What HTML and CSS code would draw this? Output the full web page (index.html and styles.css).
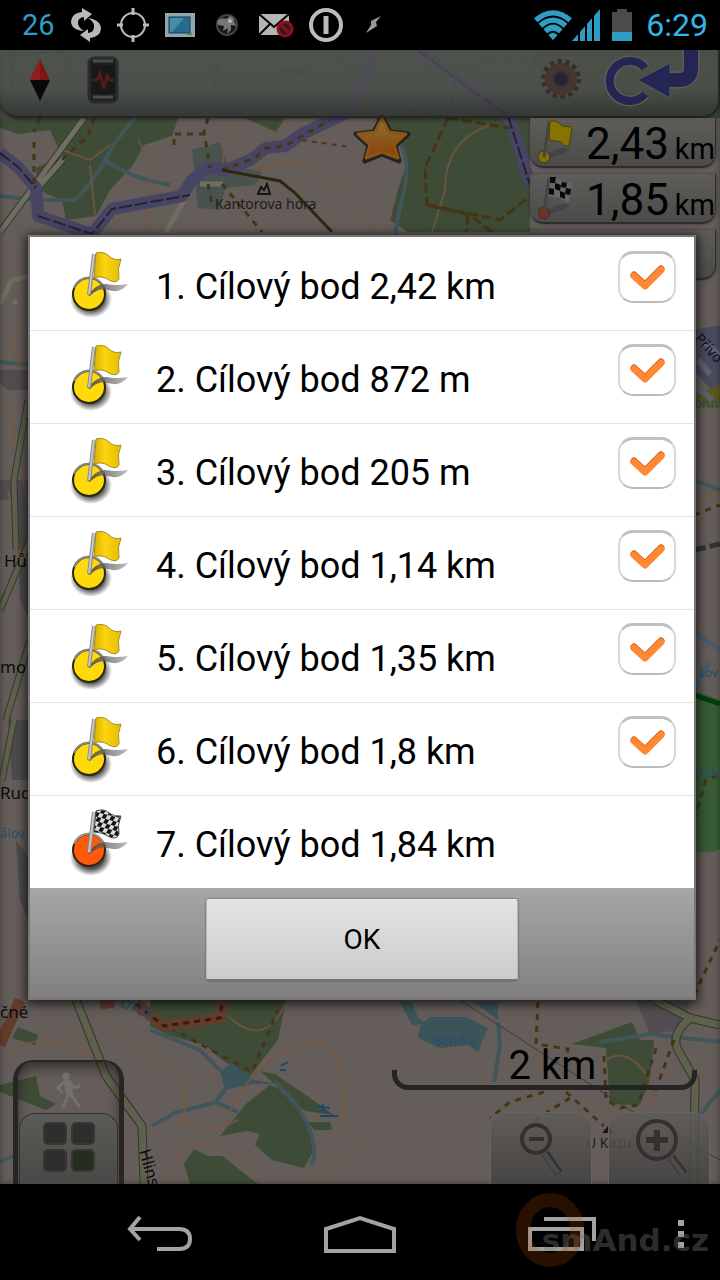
FILE: index.html
```html
<!DOCTYPE html>
<html lang="cs">
<head>
<meta charset="utf-8">
<meta name="viewport" content="width=device-width, initial-scale=1">
<title>Cílové body</title>
<link rel="stylesheet" href="styles.css">
</head>
<body>
<svg class="defs" aria-hidden="true">
  <defs>
    <linearGradient id="gold" x1="0" x2="1"><stop offset="0" stop-color="#d9b000"/><stop offset=".4" stop-color="#fbd510"/><stop offset="1" stop-color="#e6bc00"/></linearGradient>
    <radialGradient id="blur-shadow"><stop offset=".6" stop-color="#000" stop-opacity=".7"/><stop offset="1" stop-color="#000" stop-opacity="0"/></radialGradient>
    <linearGradient id="cast" x1="0" x2="1"><stop offset="0" stop-color="#444" stop-opacity=".9"/><stop offset="1" stop-color="#777" stop-opacity=".5"/></linearGradient>
    <pattern id="chess" width="8" height="9" patternUnits="userSpaceOnUse" patternTransform="translate(28 4) rotate(14) skewX(-16)"><rect width="8" height="9" fill="#ddd"/><rect width="4" height="4.500" fill="#111"/><rect x="4" y="4.500" width="4" height="4.500" fill="#111"/></pattern>
    <symbol id="pin-base" viewBox="0 0 62 68">
      <ellipse cx="23" cy="49" rx="21" ry="19" fill="url(#blur-shadow)"/>
    </symbol>
    <symbol id="pole" viewBox="0 0 62 68">
      <path d="M20 45 Q29 33 38 34 Q48 36 60 34 Q52 44 40 40 Q30 37 22 46Z" fill="url(#cast)"/>
      <path d="M21 45 L26 4" stroke="#888" stroke-width="4"/><path d="M21 44 L26 4" stroke="#c9c9c9" stroke-width="2"/>
    </symbol>
    <symbol id="flag-yellow" viewBox="0 0 62 68">
      <use href="#pin-base"/>
      <circle cx="21" cy="44" r="16" fill="#ffda0a" stroke="#2a2710" stroke-width="2"/>
      <path d="M6 38 A16 16 0 0 1 36 38" fill="none" stroke="#888" stroke-width="2"/>
      <use href="#pole"/>
      <path d="M28 3 Q36 1 41 6 Q46 11 53 9 Q49 18 51 29 Q48 34 41 30 Q34 25 26 28Z" fill="url(#gold)" stroke="#a58b24"/>
    </symbol>
    <symbol id="flag-finish" viewBox="0 0 62 68">
      <use href="#pin-base"/>
      <circle cx="21" cy="42" r="16" fill="#ff5a0a" stroke="#3a2018" stroke-width="2"/>
      <path d="M6 36 A16 16 0 0 1 36 36" fill="none" stroke="#999" stroke-width="2"/>
      <use href="#pole"/>
      <path d="M28 3 Q36 0 41 5 Q46 9 53 8 Q49 17 51 26 Q49 32 42 29 Q34 24 26 24Z" fill="url(#chess)" stroke="#444"/>
    </symbol>
    <symbol id="tick" viewBox="0 0 58 52"><path d="M16 25 L27 35 L43 19" fill="none" stroke="#c85a17" stroke-width="7" stroke-linecap="round" stroke-linejoin="round" transform="translate(0 -1)"/><path d="M16 25 L27 35 L43 19" fill="none" stroke="#ff8832" stroke-width="7" stroke-linecap="round" stroke-linejoin="round"/></symbol>
  </defs>
</svg>

<header class="status">
  <div class="status-left">
    <span class="temp">26</span>
    <svg width="32" height="34" viewBox="0 0 32 34" fill="#b9b9b9"><path d="M12 4 L12 0 L22 6 L14 13 L14 9 Q7 10 8 16 Q9 20 14 23 Q1 22 1 13 Q2 5 12 4Z"/><path d="M20 30 L20 34 L10 27 L18 21 L18 25 Q25 24 24 17 Q23 13 18 10 Q31 12 31 21 Q30 29 20 30Z"/></svg>
    <svg width="32" height="34" viewBox="1 0 32 34" fill="none" stroke="#bbb" stroke-width="2"><circle cx="17" cy="17" r="12"/><path d="M17 0V7M17 27V34M1 17H7M27 17H33" stroke-width="3"/></svg>
    <svg width="32" height="26" viewBox="0 0 32 26"><rect x="1" y="1" width="30" height="24" fill="#93a5ad"/><rect x="5" y="5" width="21" height="16" fill="#276b91" stroke="#173c55"/><path d="M6 6H20L8 20H6Z" fill="#438caa"/><path d="M23 22H28" stroke="#39974d" stroke-width="2"/></svg>
    <svg width="32" height="26" viewBox="-3 0 32 26"><circle cx="13" cy="13" r="10" fill="#171717" stroke="#444" stroke-width="2"/><path d="M3 9 Q8 5 12 7 L16 4 Q20 5 20 9 L22 14 L17 13 L17 18 L13 22 L14 16 L9 19 L10 14 L4 13Z" fill="#777"/><circle cx="16" cy="9" r="2" fill="#bbb"/></svg>
    <svg width="36" height="26" viewBox="0 0 36 26"><path d="M1 2H31V23H1Z" fill="#b5b5b5"/><path d="M1 2L16 15L31 2M1 23L12 12M20 12L31 23" fill="none" stroke="#000" stroke-width="2"/><circle cx="27" cy="17" r="7" fill="#222" stroke="#930d1c" stroke-width="3"/><path d="M22 12L32 22" stroke="#930d1c" stroke-width="3"/></svg>
    <svg width="34" height="34" viewBox="0 0 34 34"><circle cx="17" cy="17" r="15" fill="none" stroke="#bbb" stroke-width="4"/><path d="M17 8V26" stroke="#bbb" stroke-width="5"/></svg>
    <svg width="26" height="20" viewBox="-7 0 26 20"><path d="M16 1L6 6L6 10L1 18L12 11L11 7Z" fill="#999"/></svg>
  </div>
  <div class="status-right">
    <svg width="38" height="32" viewBox="0 0 40 32"><path d="M0 9Q20-8 40 9L20 32Z" fill="#309cc4"/><path d="M4 14Q20 0 36 14M9 20Q20 9 31 20M14 26Q20 20 26 26" fill="none" stroke="#000" stroke-width="2"/></svg>
    <svg width="28" height="32" viewBox="0 0 28 32"><path d="M28 0V32H0Z" fill="#309cc4"/><path d="M7 20V32M14 14V32M21 6V32" stroke="#000" stroke-width="2"/></svg>
    <svg class="battery" width="20" height="32" viewBox="0 0 20 32"><path d="M5 0H15V3H20V32H0V3H5Z" fill="#4b4b4b"/><path d="M0 23H20V32H0Z" fill="#309cc4"/></svg>
    <span class="clock">6:29</span>
  </div>
</header>

<main class="screen">
  <svg class="map" viewBox="0 50 720 1134" preserveAspectRatio="xMidYMid slice" aria-hidden="true">
    <rect y="50" width="720" height="1134" fill="#645d5a"/>
    <g fill="#3e4c37">
      <path d="M0 50H720V118H178L172 136 144 145 133 165 110 190 96 216 66 220 62 200 38 190 36 168 62 156 50 130 18 134 0 128Z"/>
      <path d="M245 118H285L276 132Z"/>
      <path d="M375 118H530V232H408L390 220 398 190 406 165 400 140Z"/>
      <path d="M150 1000H286L278 1040 250 1076 222 1060 205 1045 170 1036 150 1026Z"/>
      <path d="M220 1136L246 1104 270 1085 288 1093 312 1130 314 1150 304 1168 272 1160 255 1145 260 1134 247 1131Z"/>
      <path d="M184 1164L194 1149 208 1156 222 1156 258 1184H190Z"/>
      <path d="M260 1071L275 1074 310 1098 334 1115 305 1111ZM308 1122L330 1122 332 1130 314 1130Z"/>
      <path d="M0 1085L36 1076 40 1096 56 1104 46 1110 0 1092ZM18 1027L38 1035 35 1045 12 1038Z"/>
      <path d="M572 1044L632 1022 640 1040 654 1040 650 1080 640 1105 610 1104 606 1048Z"/>
      <path d="M694 690L720 700V850Q704 855 694 850Z" fill="#395c37"/>
    </g>
    <path d="M0 50H530L560 118H0Z" fill="#4a5147"/>
    <g fill="#48524f">
      <path d="M192 150L220 142 228 165 262 172 255 185 225 188 220 210 198 208Z"/>
      <path d="M0 370H30V390H8L0 384ZM0 480H30V500H0Z" fill="#524b50"/>
      <path d="M16 500H30V620L20 600ZM8 720H30V780H12ZM16 840L30 860V925L20 900Z" fill="#4d4b4b"/>
      <path d="M635 998L690 1003 680 1030 650 1034Z" fill="#524d52"/>
      <path d="M694 330L720 325V400L694 370Z" fill="#494a5b"/>
    </g>
    <g fill="#3b545a">
      <path d="M420 1026L430 1017H466L488 1028 482 1042 478 1052 468 1045 440 1048 418 1038Z"/>
      <path d="M400 1002H412L418 1018 428 1024 412 1025Z"/><path d="M474 1002H498V1020Z"/>
      <path d="M220 1071L232 1063 254 1080 276 1084 252 1084 225 1090Z"/>
    </g>
    <g fill="none" stroke="#41565a" stroke-width="4" stroke-linejoin="round">
      <path d="M135 118Q115 140 105 160T75 200L36 200 0 196M105 160Q130 178 170 185"/>
      <path d="M150 1030L200 1050 220 1070M152 1126L175 1113 216 1102 226 1088M216 1102L238 1112"/>
      <path d="M275 1082L296 1104Q320 1140 312 1165"/><path d="M498 1022L500 1045 494 1082"/>
      <path d="M600 1042L650 1034 720 1042M0 1162L26 1150M694 480L720 490M0 362L30 365M700 1115L720 1090"/>
      <path d="M400 145Q412 160 402 200T398 232"/>
    </g>
    <g fill="none" stroke="#78583f" stroke-width="2" opacity=".75">
      <path d="M138 140Q158 170 145 230M40 142L90 160 110 145M90 165L95 215M222 170L225 140 250 110M255 170Q300 150 340 186L360 192"/>
      <path d="M490 125Q445 140 445 190L432 232M362 210Q380 260 392 210"/>
      <path d="M90 1010Q140 1045 168 1070T180 1120Q210 1135 238 1120M60 1025Q90 1050 108 1080M170 1184Q175 1145 205 1145T260 1184M228 1114Q255 1060 300 1043T346 1125L360 1142 310 1184"/>
      <path d="M228 1016Q265 1050 285 1004M0 1062Q40 1020 98 1060M606 1060Q628 1045 650 1080L656 1140M8 400L25 490"/>
      <path d="M694 500L720 492M30 325L10 340 20 370M8 490L20 550 8 600"/>
    </g>
    <g fill="none" stroke="#383835" stroke-width="7"><path d="M0 232L84 118M36 190L64 158M16 550L14 480 28 400M0 610L30 540M6 720L30 640M2 780L14 720"/></g>
    <g fill="none" stroke="#706e61" stroke-width="5"><path d="M0 232L84 118M36 190L64 158M200 184H223M166 232L190 190M0 304L12 280 30 276M14 304L16 300"/></g>
    <path d="M16 550L14 480 28 400M0 610L30 540M6 720L30 640M2 780L14 720" fill="none" stroke="#5e614b" stroke-width="5"/>
    <g fill="none" stroke="#343630" stroke-width="9" stroke-linejoin="round"><path d="M76 1000L86 1025 106 1076 142 1126 144 1184"/><path d="M655 1000L690 1018 720 1025M690 1018Q670 1035 678 1050L695 1080 694 1184"/></g>
    <g fill="none" stroke="#5e614b" stroke-width="7" stroke-linejoin="round"><path d="M76 1000L86 1025 106 1076 142 1126 144 1184"/><path d="M655 1000L690 1018 720 1025M690 1018Q670 1035 678 1050L695 1080 694 1184"/></g>
    <g fill="none" stroke="#474563" stroke-width="12" stroke-linejoin="round"><path d="M0 153L18 167 36 188 38 216 92 234 112 209 182 196 192 180 208 167 226 170 250 160 266 148 285 146 302 134 348 112 364 84 375 50"/><path d="M418 50L455 78 508 116 520 150 530 185"/></g>
    <g fill="none" stroke="#25232e" stroke-width="2" stroke-dasharray="13 3"><path d="M0 153L18 167 36 188M38 216L92 234 112 209 190 195M418 50L455 78 508 116 530 185"/></g>
    <g fill="none" stroke="#453415" stroke-width="3" stroke-dasharray="6 6">
      <path d="M94 118L88 136 62 160M34 142V188M40 118L34 132M208 118L204 132 210 168M174 145V134H204M222 170L255 158 266 148 285 146 330 120M208 184L212 204M222 184L262 232"/>
      <path d="M170 1028L252 1072 278 1010M538 1002L536 1044 568 1049 566 1062M604 1056L606 1100 620 1108 638 1105 656 1048M544 1092L510 1102 490 1118M566 1092L604 1126M570 1098L535 1120M674 1040L655 1092M694 515L720 505M694 820L706 780 720 775M694 995L720 940"/>
      <path d="M448 118L425 168 427 205 470 215 492 232M448 118L510 128M427 205L500 220 530 196M468 215L466 232" stroke-dasharray="10 4"/>
    </g>
    <g fill="none" stroke="#39372f" stroke-width="2" stroke-dasharray="9 5" opacity=".7"><path d="M0 57L80 50M10 50L15 118M70 60L38 118M218 50L212 118M320 50L360 70M448 118L456 72 485 58H520L560 72 605 80 640 90M372 90L386 104 448 118M694 80L706 105"/></g>
    <path d="M222 170L280 181 294 192 332 232" fill="none" stroke="#30260e" stroke-width="3"/>
    <path d="M302 140L350 147" fill="none" stroke="#5a2d2a" stroke-width="2" stroke-dasharray="5 5"/>
    <path d="M258 50L300 60 330 52" fill="none" stroke="#3f6035" stroke-width="5" stroke-dasharray="5 3"/>
    <path d="M136 1004L164 1026 220 1018 222 1002M100 1004L114 1002M0 1045L20 1000" fill="none" stroke="#633d2c" stroke-width="11"/>
    <path d="M136 1004L164 1026 220 1018 222 1002" fill="none" stroke="#39180f" stroke-width="3" stroke-dasharray="6 5"/>
    <path d="M460 1000L630 1110 720 1160" fill="none" stroke="#3e3938"/>
    <path d="M694 550L720 544" stroke="#353331" stroke-width="5" stroke-dasharray="12 4"/>
    <path d="M694 396L720 385V408L694 406Z" fill="#5d581d"/><path d="M694 695L720 704" stroke="#063e09" stroke-width="5"/>
    <path d="M698 360L710 374M705 342L720 356M696 386L712 400" stroke="#62616b" stroke-width="6"/>
    <path d="M694 632L720 650M694 690L710 662" stroke="#4a5b6d" stroke-width="5"/>
    <path d="M258 194L261 187 264 190 267 184 270 194Z" fill="none" stroke="#151515" stroke-width="2"/>
    <path d="M602 1133L608 1126 614 1133Z" fill="#151515"/>
    <path d="M280 1070H286M281 1066L288 1062M316 1106L330 1108M323 1104V1112M320 1116H338" stroke="#194774" stroke-width="2"/>
    <g class="map-text">
      <text x="215" y="209">Kantorova hora</text>
      <text x="433" y="1045" class="water">Bendík</text>
      <text x="586" y="1148">U Kazu</text>
      <text x="4" y="567" class="town">Hů</text><text x="0" y="673" class="town">mo</text><text x="0" y="799" class="town">Rud</text><text x="0" y="1018" class="town">čné</text>
      <text x="0" y="838" class="water">álov</text><text x="694" y="408" class="water">ohni</text><text x="698" y="677" class="water">šov</text><text x="692" y="777" class="water">eník</text>
      <text class="navy" transform="translate(694 339) rotate(48)">Přívo</text>
      <text class="street" transform="translate(139 1151) rotate(74)">Hlins</text>
      <text class="water" transform="translate(112 1003) rotate(24)">POTOK</text>
      <text class="faint" x="281" y="78">ope</text>
    </g>
    <defs><linearGradient id="star" x2="0" y2="1"><stop stop-color="#8f7434"/><stop offset="1" stop-color="#8b3e08"/></linearGradient></defs>
    <path d="M382 117L390 132 408 134 395 146 399 161 382 154 365 161 369 146 356 134 374 132Z" fill="#171410" stroke="#171410" stroke-width="5" stroke-linejoin="round" opacity=".8"/>
    <path d="M382 118L389 132 406 134 394 145 398 158 382 152 366 158 370 145 358 134 375 132Z" fill="url(#star)" stroke="#8a5614" stroke-width="3" stroke-linejoin="round"/>
  </svg>

  <div class="hud">
    <div class="toolbar">
      <div class="tools">
        <button class="tool" aria-label="Kompas"><svg width="24" height="44" viewBox="0 0 24 44"><path d="M12 1L22 22H2Z" fill="#7b1714"/><path d="M12 1V22H2Z" fill="#8c1f1d"/><path d="M2 22H22L12 43Z" fill="#080808"/></svg></button>
        <button class="tool" aria-label="Profil"><svg width="32" height="48" viewBox="0 0 32 48"><rect x="2" y="2" width="28" height="44" rx="5" fill="#1e1f1f" stroke="#2a2c2c" stroke-width="3"/><rect x="4" y="9" width="24" height="29" fill="#151919"/><path d="M6 5H26M6 41H26" stroke="#4b4e4e" stroke-width="3"/><path d="M5 24H10L13 17L17 33L20 20L23 24H27" fill="none" stroke="#551a1b" stroke-width="3"/></svg></button>
      </div>
      <div class="tools tools-right">
        <button class="tool" aria-label="Nastavení"><svg width="42" height="42" viewBox="0 0 42 42"><circle cx="21" cy="21" r="17" fill="none" stroke="#3a2c2a" stroke-width="6" stroke-dasharray="4 3.630"/><circle cx="21" cy="21" r="11" fill="#29264a" stroke="#463632" stroke-width="10"/><circle cx="21" cy="21" r="7" fill="#25233b" stroke="#332b33" stroke-width="2"/></svg></button>
        <button class="tool" aria-label="Zpět na polohu"><svg width="98" height="58" viewBox="0 0 98 58"><path d="M41 18A20 20 0 1 0 41 44" fill="none" stroke="#5b5c58" stroke-width="11"/><path d="M41 18A20 20 0 1 0 41 44" fill="none" stroke="#232653" stroke-width="8"/><path d="M87 0V18Q87 30 75 30H62" fill="none" stroke="#5b5c58" stroke-width="17"/><path d="M34 30L66 13V48Z" fill="#232653" stroke="#5b5c58"/><path d="M87 0V18Q87 30 75 30H62" fill="none" stroke="#232653" stroke-width="14"/></svg></button>
      </div>
    </div>

    <div class="distances">
      <div class="distance"><svg width="34" height="44" viewBox="0 0 34 44"><path d="M10 34Q22 25 32 29Q24 36 10 38Z" fill="#444"/><circle cx="6" cy="37" r="6" fill="#7f7008" stroke="#333"/><path d="M6 37L11 2" stroke="#444" stroke-width="3"/><path d="M12 1Q20 0 24 6L34 7L31 26Q27 27 23 22L11 20Z" fill="#877300" stroke="#4a4007"/></svg><span class="value">2,43</span><span class="unit">km</span></div>
      <div class="distance"><svg width="34" height="44" viewBox="0 0 34 44"><path d="M10 34Q22 25 32 29Q24 36 10 38Z" fill="#444"/><circle cx="6" cy="37" r="6" fill="#772c20" stroke="#333"/><path d="M6 37L11 2" stroke="#444" stroke-width="3"/><path d="M12 1Q20 0 24 6L34 7L31 26Q27 27 23 22L11 20Z" fill="#666"/><path d="M12 1H18L17 7H12ZM24 6L29 7L28 12L23 11ZM17 7L23 9L22 15L17 13ZM11 12L16 13L16 19L11 18ZM28 12L33 13L32 19L27 18ZM22 15L27 17L27 23L22 21Z" fill="#090909"/></svg><span class="value">1,85</span><span class="unit">km</span></div>
      <div class="distance"></div>
    </div>

    <div class="bottom">
      <div class="mode">
        <svg width="28" height="38" viewBox="0 0 28 38" fill="none" stroke="#70706e" stroke-width="3" stroke-linecap="round"><circle cx="11" cy="4" r="2" fill="#70706e"/><path d="M12 10L15 22" stroke-width="7"/><path d="M9 10L3 16L7 20M15 10L19 16L24 14M13 23L8 35M16 23L20 28L24 34"/></svg>
        <button class="menu" aria-label="Nabídka"><i></i><i></i><i></i><i></i></button>
      </div>
      <div class="right">
        <div class="scale"><span>2 km</span></div>
        <div class="zooms">
          <button class="zoom" aria-label="Oddálit"><svg width="56" height="62" viewBox="-3 -2 56 62" fill="none"><circle cx="20" cy="24" r="14" stroke="#333130" stroke-width="4"/><path d="M13 24H28" stroke="#333130" stroke-width="4"/><path d="M29 38L43 58" stroke="#31302f" stroke-width="8"/><path d="M28 38L42 58" stroke="#4c4b49" stroke-width="5"/></svg></button>
          <button class="zoom" aria-label="Přiblížit"><svg width="56" height="62" viewBox="-3 -1 56 62" fill="none"><circle cx="23" cy="26" r="19" stroke="#333130" stroke-width="4"/><path d="M12 26H34M23 16V37" stroke="#333130" stroke-width="6"/><path d="M37 43L50 60" stroke="#31302f" stroke-width="8"/><path d="M36 43L49 60" stroke="#4c4b49" stroke-width="5"/></svg></button>
        </div>
      </div>
    </div>
  </div>

  <div class="overlay">
    <form class="dialog" role="dialog" aria-label="Cílové body">
      <ul class="points">
        <li><label class="point"><svg class="flag"><use href="#flag-yellow"/></svg><span class="name">1. Cílový bod 2,42 km</span><span class="check"><input type="checkbox" checked><svg><use href="#tick"/></svg></span></label></li>
        <li><label class="point"><svg class="flag"><use href="#flag-yellow"/></svg><span class="name">2. Cílový bod 872 m</span><span class="check"><input type="checkbox" checked><svg><use href="#tick"/></svg></span></label></li>
        <li><label class="point"><svg class="flag"><use href="#flag-yellow"/></svg><span class="name">3. Cílový bod 205 m</span><span class="check"><input type="checkbox" checked><svg><use href="#tick"/></svg></span></label></li>
        <li><label class="point"><svg class="flag"><use href="#flag-yellow"/></svg><span class="name">4. Cílový bod 1,14 km</span><span class="check"><input type="checkbox" checked><svg><use href="#tick"/></svg></span></label></li>
        <li><label class="point"><svg class="flag"><use href="#flag-yellow"/></svg><span class="name">5. Cílový bod 1,35 km</span><span class="check"><input type="checkbox" checked><svg><use href="#tick"/></svg></span></label></li>
        <li><label class="point"><svg class="flag"><use href="#flag-yellow"/></svg><span class="name">6. Cílový bod 1,8 km</span><span class="check"><input type="checkbox" checked><svg><use href="#tick"/></svg></span></label></li>
        <li><div class="point"><svg class="flag"><use href="#flag-finish"/></svg><span class="name">7. Cílový bod 1,84 km</span></div></li>
      </ul>
      <div class="actions"><button class="ok" type="button">OK</button></div>
    </form>
  </div>
</main>

<nav class="navbar">
  <button aria-label="Zpět"><svg width="68" height="38" viewBox="0 0 68 38" fill="none" stroke="#a3a3a3" stroke-width="4"><path d="M14 2L4 14L14 25"/><path d="M4 14H53Q64 14 64 24T53 34H31"/></svg></button>
  <button aria-label="Domů"><svg width="74" height="40" viewBox="0 0 74 40" fill="none" stroke="#a3a3a3" stroke-width="4"><path d="M3 15L37 4L71 15V37H3Z"/></svg></button>
  <button aria-label="Poslední aplikace"><svg width="70" height="38" viewBox="0 0 70 38" fill="none" stroke="#a3a3a3" stroke-width="4"><path d="M17 4H67V26"/><path d="M3 14H55V34H3Z"/></svg></button>
  <button aria-label="Další"><svg width="8" height="32" viewBox="0 0 8 32" fill="#a3a3a3"><path d="M1 2H7V8H1ZM1 13H7V19H1ZM1 24H7V30H1Z"/></svg></button>
  <div class="watermark"><svg width="70" height="76" viewBox="0 0 70 76"><ellipse cx="35" cy="38" rx="27" ry="30" fill="none" stroke="#b04a00" stroke-opacity=".22" stroke-width="14"/></svg><span>smAnd.cz</span></div>
</nav>
</body>
</html>
```
FILE: styles.css
```css
*, *::after { box-sizing: border-box; }
body {
  margin: 0;
  min-height: 100vh;
  display: flex;
  flex-direction: column;
  background: #000;
  color: #000;
  font-family: Roboto, "Noto Sans", sans-serif;
}
button { margin: 0; padding: 0; border: 0; background: none; font: inherit; color: inherit; }
svg { display: block; flex: none; }
.defs { position: absolute; width: 0; height: 0; }

.status {
  height: 50px;
  padding: 0 12px 0 22px;
  display: flex;
  align-items: center;
  justify-content: space-between;
  color: #309cc4;
}
.status-left { display: flex; align-items: center; gap: 15px; }
.status-right { display: flex; align-items: center; }
.temp { font-size: 29px; }
.battery { margin: 0 14px 0 12px; }
.clock { font-size: 32px; color: #33b5e5; }

.screen { flex: 1; position: relative; display: grid; overflow: hidden; }
.map { position: absolute; inset: 0; width: 100%; height: 100%; }
.map-text { font-family: "Noto Sans", sans-serif; font-size: 14px; fill: #1d1b1a; }
.map-text .town { font-size: 17px; fill: #0c0b0b; }
.map-text .street { font-size: 16px; fill: #0c0b0b; }
.map-text .water { font-size: 13px; fill: #274f6d; }
.map-text .navy { font-size: 14px; fill: #0e0e34; }
.map-text .faint { fill: #34363a; }

.hud, .overlay { grid-area: 1 / 1; position: relative; min-width: 0; }
.hud { display: flex; flex-direction: column; box-shadow: inset 0 0 6px #0006; }
.toolbar {
  height: 68px;
  display: flex;
  justify-content: space-between;
  padding: 0 16px 0 28px;
  border-bottom: 2px solid #252625;
  border-right: 2px solid #252625;
  border-radius: 0 0 18px 18px;
  background: linear-gradient(#505350bb, #4d504dbb 60%, #303230cc);
  box-shadow: 0 1px 4px #0008;
}
.tools { display: flex; align-items: center; gap: 35px; padding-bottom: 6px; }
.tools-right { gap: 22px; padding-bottom: 8px; }

.distances { align-self: flex-end; width: 190px; padding-right: 4px; display: flex; flex-direction: column; gap: 6px; }
.distance {
  height: 50px;
  padding: 0 0 0 8px;
  display: flex;
  align-items: baseline;
  justify-content: flex-end;
  border-bottom: 2px solid #2d2d2c;
  border-right: 1px solid #2d2d2c;
  border-radius: 0 0 14px 14px;
  background: linear-gradient(#5d5d5add, #474846dd);
  box-shadow: 0 0 3px #0006;
}
.distance svg { align-self: center; margin-right: auto; }
.value { font-size: 44px; line-height: 52px; }
.unit { margin-left: 6px; font-size: 29px; }

.bottom { margin-top: auto; display: flex; justify-content: space-between; align-items: flex-end; padding: 0 10px 0 13px; }
.mode {
  width: 111px;
  height: 124px;
  padding: 10px 1px 0;
  display: flex;
  flex-direction: column;
  align-items: center;
  justify-content: space-between;
  border: 5px solid #282625;
  border-width: 2px 5px 0;
  border-radius: 20px 20px 0 0;
  box-shadow: inset 0 6px 12px #0007;
}
.menu {
  width: 100%;
  height: 71px;
  display: grid;
  grid-template-columns: 24px 24px;
  grid-auto-rows: 23px;
  gap: 4px;
  justify-content: center;
  align-content: center;
  padding-bottom: 4px;
  border: 1px solid #343332;
  border-bottom: 0;
  border-radius: 16px 16px 0 0;
  background: linear-gradient(#5b5b57, #484946);
}
.menu i { border: 2px solid #373635; border-radius: 5px; background: #302e2d; }
.menu i:last-child { background: #252c20; }

.right { width: 318px; display: flex; flex-direction: column; gap: 22px; }
.scale {
  height: 46px;
  margin-right: 13px;
  display: flex;
  flex-direction: column;
  align-items: center;
  justify-content: flex-end;
  font-size: 40px;
  line-height: 44px;
}
.scale span { padding-left: 16px; }
.scale::after {
  content: "";
  width: 100%;
  height: 20px;
  margin-top: -18px;
  flex: none;
  border: 5px solid #252424;
  border-top: 0;
  border-radius: 0 0 16px 16px;
}
.zooms { display: flex; justify-content: flex-end; gap: 16px; }
.zoom {
  width: 102px;
  height: 72px;
  display: flex;
  justify-content: center;
  border: 1px solid #666461;
  border-bottom: 0;
  border-radius: 16px 16px 0 0;
  background: linear-gradient(#5e5c59cc, #403f3ecc);
}

.overlay { display: flex; align-items: center; padding: 0 24px 0 28px; }
.dialog {
  flex: 1;
  min-width: 0;
  border: 2px solid #777;
  background: #fff;
  box-shadow: 0 2px 10px 2px #000b;
}
.points { margin: 0; padding: 0; list-style: none; }
.points li { border-bottom: 1px solid #e4e4e4; }
.points li:last-child { border-color: #aaa; }
.point { height: 92px; padding: 0 18px 0 38px; display: flex; align-items: center; }
.points li:first-child { padding-top: 1px; }
.flag { width: 62px; height: 68px; }
.name { flex: 1; margin-left: 26px; padding-top: 6px; font-size: 36px; line-height: 44px; }
.check { display: grid; width: 58px; height: 52px; margin-bottom: 14px; flex: none; }
.check > * { grid-area: 1 / 1; width: 100%; height: 100%; margin: 0; }
.check svg { pointer-events: none; visibility: hidden; }
.check input:checked + svg { visibility: visible; }
.check input {
  appearance: none;
  border: 2px solid #d8d8d8;
  border-top: 3px solid #c0c0c0;
  border-bottom-color: #bbb;
  border-radius: 15px;
  background: #fff;
}
.actions {
  height: 109px;
  padding-bottom: 6px;
  display: flex;
  align-items: center;
  justify-content: center;
  background: linear-gradient(#a6a6a6, #808080);
}
.ok {
  width: 47%;
  height: 82px;
  border: 1px solid #b9b9b9;
  border-top-color: #eee;
  border-bottom: 2px solid #747474;
  border-radius: 3px;
  background: linear-gradient(#e3e3e3, #cbcbcb);
  box-shadow: 0 0 2px #444;
  font-size: 28px;
}

.navbar {
  position: relative;
  height: 96px;
  padding: 0 22px 0 60px;
  display: grid;
  grid-template-columns: 200fr 200fr 204fr 34fr;
  align-items: center;
}
.navbar button { display: flex; justify-content: center; padding-top: 4px; }
.watermark { position: absolute; right: 11px; bottom: 12px; display: flex; align-items: center; pointer-events: none; }
.watermark span { margin-left: -43px; padding-top: 20px; color: #77777766; font: bold 31px/40px "DejaVu Sans", sans-serif; }
```
